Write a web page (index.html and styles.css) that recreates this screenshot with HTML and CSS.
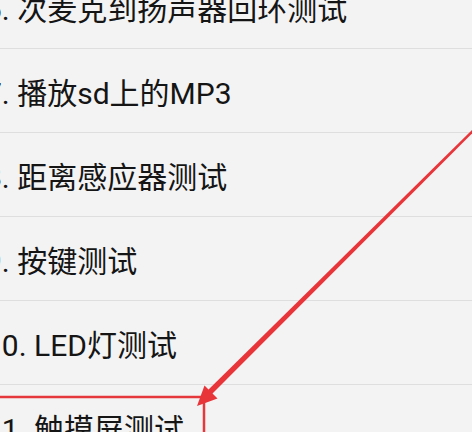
FILE: index.html
```html
<!DOCTYPE html>
<html lang="zh-CN">
<head>
<meta charset="utf-8">
<title>测试列表</title>
<link rel="stylesheet" href="styles.css">
</head>
<body>
<div class="screen">
  <ul class="list">
    <li class="item">6. 次麦克到扬声器回环测试</li>
    <li class="item">7. 播放sd上的MP3</li>
    <li class="item">8. 距离感应器测试</li>
    <li class="item">9. 按键测试</li>
    <li class="item">10. LED灯测试</li>
    <li class="item">11. 触摸屏测试</li>
  </ul>
  <svg class="annot" width="472" height="432" viewBox="0 0 472 432">
    <rect x="-10" y="397" width="214" height="60" fill="none" stroke="#e5383c" stroke-width="2.5"/>
    <polygon points="472.5,129.5 474,131.5 210,396 206,392" fill="#e8353a"/>
    <polygon points="197,406 204.5,385.5 217.5,398.5" fill="#e8353a"/>
  </svg>
</div>
</body>
</html>
```
FILE: styles.css
```css
html, body {
  margin: 0;
  padding: 0;
  background: #f3f3f3;
}
.screen {
  position: relative;
  width: 472px;
  height: 432px;
  overflow: hidden;
  background: #f3f3f3;
}
.list {
  list-style: none;
  margin: -35px 0 0 0;
  padding: 0;
}
.item {
  height: 83px;
  border-bottom: 1px solid #dedede;
  display: flex;
  align-items: center;
  padding-left: 0;
  text-indent: -15px;
  white-space: nowrap;
  font-family: Roboto, "Noto Sans CJK SC", sans-serif;
  font-size: 30px;
  color: #151515;
}
.annot {
  position: absolute;
  left: 0;
  top: 0;
  pointer-events: none;
}
```
